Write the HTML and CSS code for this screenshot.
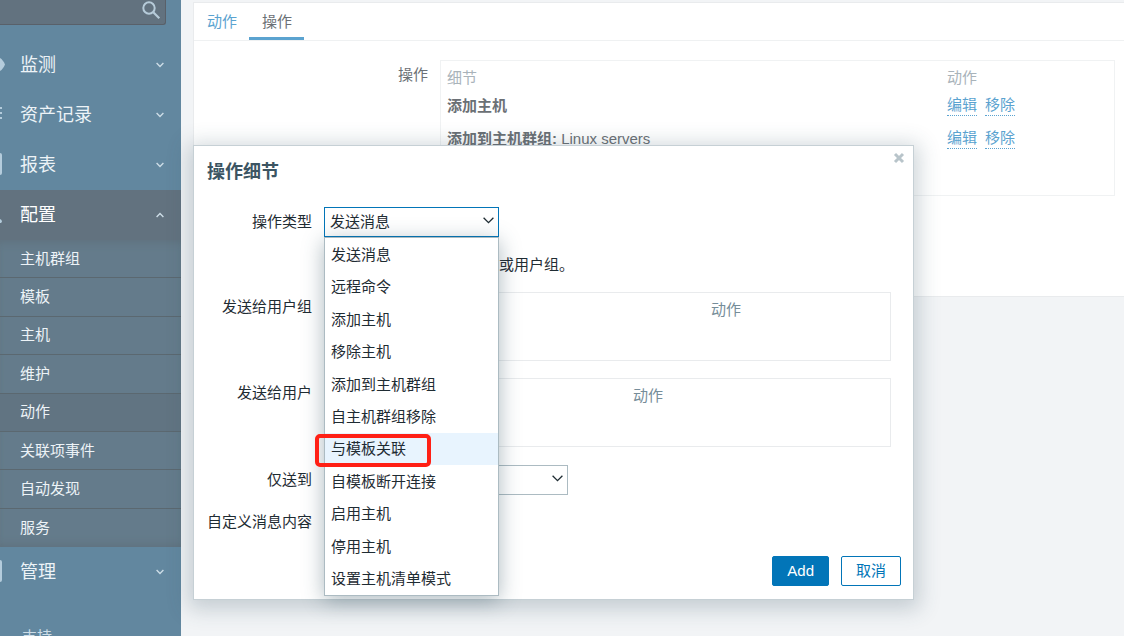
FILE: index.html
```html
<!DOCTYPE html>
<html lang="zh-CN">
<head>
<meta charset="utf-8">
<meta name="viewport" content="width=device-width, initial-scale=1">
<title>操作细节</title>
<link rel="stylesheet" href="styles.css">
</head>
<body>
<svg class="defs" aria-hidden="true">
  <symbol id="chevron" viewBox="0 0 8 6"><path d="M.6 1 4 4.4 7.4 1" fill="none" stroke="currentColor" stroke-width="1.4"/></symbol>
  <symbol id="arrow" viewBox="0 0 11 7"><path d="M.6 .8 5.500 5.700 10.400 .8" fill="none" stroke="currentColor" stroke-width="1.300"/></symbol>
</svg>
<div class="app">
  <aside class="sidebar">
    <div class="search">
      <input class="search-input" type="text" aria-label="搜索">
      <button class="search-button" type="button" aria-label="搜索">
        <svg width="20" height="20" viewBox="0 0 20 20"><circle cx="8" cy="8" r="5.700" fill="none" stroke="currentColor" stroke-width="2"/><path d="m12.300 12.300 6 6" stroke="currentColor" stroke-width="2.200"/></svg>
      </button>
    </div>
    <nav>
      <ul class="menu">
        <li><a class="menu-link" href="#"><svg class="menu-icon" viewBox="0 0 5 24"><path d="M0 5C2 6 4 9 5 11.500 4 14 2 17 0 18z" fill="currentColor"/></svg><span>监测</span><svg class="chevron"><use href="#chevron"/></svg></a></li>
        <li><a class="menu-link" href="#"><svg class="menu-icon" viewBox="0 0 5 24"><path d="M0 4h2v2H0zM0 9h2v2H0zM0 14h2v2H0z" fill="currentColor"/></svg><span>资产记录</span><svg class="chevron"><use href="#chevron"/></svg></a></li>
        <li><a class="menu-link" href="#"><svg class="menu-icon" viewBox="0 0 5 24"><path d="M0 0q2 0 2 2v18q0 2-2 2z" fill="currentColor"/></svg><span>报表</span><svg class="chevron"><use href="#chevron"/></svg></a></li>
        <li>
          <a class="menu-link menu-link-open" href="#" aria-expanded="true"><svg class="menu-icon" viewBox="0 0 5 24"><path d="M0 16 1.500 17 2 19 .8 20H0z" fill="currentColor"/></svg><span>配置</span><svg class="chevron chevron-up"><use href="#chevron"/></svg></a>
          <ul class="submenu">
            <li><a href="#">主机群组</a></li>
            <li><a href="#">模板</a></li>
            <li><a href="#">主机</a></li>
            <li><a href="#">维护</a></li>
            <li class="selected"><a href="#">动作</a></li>
            <li><a href="#">关联项事件</a></li>
            <li><a href="#">自动发现</a></li>
            <li><a href="#">服务</a></li>
          </ul>
        </li>
        <li><a class="menu-link" href="#"><svg class="menu-icon" viewBox="0 0 5 24"><path d="M0 0q2 0 2 2v18q0 2-2 2z" fill="currentColor"/></svg><span>管理</span><svg class="chevron"><use href="#chevron"/></svg></a></li>
      </ul>
      <a class="support" href="#">支持</a>
    </nav>
  </aside>

  <main class="content">
    <section class="panel">
      <div class="tabs" role="tablist">
        <a class="tab" role="tab" href="#">动作</a>
        <a class="tab tab-active" role="tab" aria-selected="true" href="#">操作</a>
      </div>
      <div class="panel-body">
        <div class="panel-label">操作</div>
        <div class="operations">
          <table class="operations-table">
            <thead><tr><th>细节</th><th class="actions-col">动作</th></tr></thead>
            <tbody>
              <tr><td><b>添加主机</b></td><td><div class="links"><a href="#">编辑</a><a href="#">移除</a></div></td></tr>
              <tr><td><b>添加到主机群组:</b> Linux servers</td><td><div class="links"><a href="#">编辑</a><a href="#">移除</a></div></td></tr>
            </tbody>
          </table>
        </div>
      </div>
    </section>
  </main>
</div>

<div class="dialog" role="dialog" aria-labelledby="dialog-title">
  <button class="close" type="button" aria-label="关闭"><svg width="12" height="12" viewBox="0 0 12 12"><path d="m2 2 8 8M10 2l-8 8" stroke="currentColor" stroke-width="3"/></svg></button>
  <h1 class="dialog-title" id="dialog-title">操作细节</h1>
  <form class="form">
    <label class="label" for="type">操作类型</label>
    <div class="select select-type">
      <select id="type" class="select-open"><option>发送消息</option></select>
      <svg class="arrow"><use href="#arrow"/></svg>
      <ul class="options" role="listbox" aria-label="操作类型">
        <li role="option">发送消息</li>
        <li role="option">远程命令</li>
        <li role="option">添加主机</li>
        <li role="option">移除主机</li>
        <li role="option">添加到主机群组</li>
        <li role="option">自主机群组移除</li>
        <li role="option" class="option-hover">与模板关联<span class="marker"></span></li>
        <li role="option">自模板断开连接</li>
        <li role="option">启用主机</li>
        <li role="option">停用主机</li>
        <li role="option">设置主机清单模式</li>
      </ul>
    </div>

    <p class="note">或用户组。</p>

    <div class="label">发送给用户组</div>
    <div class="recipients">
      <table class="recipients-table"><thead><tr><td class="group-col"></td><th>动作</th></tr></thead></table>
    </div>

    <div class="label">发送给用户</div>
    <div class="recipients">
      <table class="recipients-table"><thead><tr><td class="user-col"></td><th>动作</th></tr></thead></table>
    </div>

    <label class="label" for="media">仅送到</label>
    <div class="select select-media">
      <select id="media"><option></option></select>
      <svg class="arrow"><use href="#arrow"/></svg>
    </div>

    <div class="label label-message">自定义消息内容</div>
  </form>
  <div class="buttons">
    <button class="button button-primary" type="button">Add</button>
    <button class="button" type="button">取消</button>
  </div>
</div>
</body>
</html>
```

FILE: styles.css
```css
* { box-sizing: border-box; }

body {
  margin: 0;
  height: 100vh;
  overflow: hidden;
  position: relative;
  background: #f2f4f6;
  color: #1f2c33;
  font: 15px/20px "Liberation Sans", "Noto Sans CJK SC", sans-serif;
}

ul { list-style: none; margin: 0; padding: 0; }
a { color: inherit; text-decoration: none; }
button, select, input { font: inherit; color: inherit; }
.defs { position: absolute; width: 0; height: 0; }

.app { display: flex; height: 100%; }

/* Sidebar */
.sidebar {
  flex: 0 0 181px;
  overflow: hidden;
  background: #62879f;
  color: #edf3f7;
}
.search {
  display: flex;
  align-items: flex-start;
  height: 25px;
  margin: 0 15px 15px 0;
  background: #62727f;
  border: solid #596069;
  border-width: 0 1px 1px 0;
  border-bottom-right-radius: 3px;
}
.search-input { flex: 1; min-width: 0; height: 24px; border: 0; background: none; }
.search-button {
  height: 20px;
  padding: 0;
  margin-right: 4px;
  border: 0;
  background: none;
  color: #b6cbd9;
}
.search-button svg { display: block; }

.menu-link {
  display: flex;
  align-items: center;
  height: 50px;
  padding-right: 17px;
  font-size: 18px;
}
.menu-link span { flex: 1; }
.menu-icon { width: 5px; height: 24px; margin-right: 15px; color: #b4ccdc; }
.chevron { width: 8px; height: 6px; color: #cddde7; }
.chevron-up { transform: rotate(180deg); }
.menu-link-open { background: #62727f; color: #fff; }
.submenu {
  display: grid;
  grid-auto-rows: 1fr;
  min-height: 307px;
  background: #647b8b;
  box-shadow: inset 0 8px 8px -6px #60717d, inset 0 -8px 8px -6px #60717d;
}
.submenu li { display: flex; border-bottom: 1px solid #5b6870; }
.submenu li:last-child { border-bottom: 0; }
.submenu a { flex: 1; display: flex; align-items: center; padding-left: 20px; }
.submenu .selected { background: #617482; }
.support { display: block; margin-top: 30px; padding-left: 22px; color: #cddde7; }

/* Page */
.content { flex: 1; min-width: 0; padding: 2px 0 0 12px; }
.panel {
  min-height: 295px;
  background: #fff;
  border: solid #e9ebed;
  border-width: 1px 0 1px 1px;
  color: #6b7075;
}
.tabs { display: flex; height: 38px; border-bottom: 1px solid #eff1f2; }
.tab { padding: 9px 12px 0 13px; color: #5ba3d0; }
.tab-active { color: #6b7075; border-bottom: 3px solid #5ba3d0; }
.panel-body {
  display: grid;
  grid-template-columns: 234px 1fr;
  column-gap: 12px;
  padding: 19px 9px 0 0;
}
.panel-label { padding-top: 5px; text-align: right; }
.operations { min-height: 136px; border: 1px solid #f0f2f3; padding: 3px 6px; }
.operations-table { width: 100%; border-collapse: collapse; table-layout: fixed; }
.operations-table th { padding: 4px 0; font-weight: 400; text-align: left; color: #a9b3ba; }
.operations-table td { padding: 3px 0 9px; }
.operations-table .actions-col { width: 161px; }
.links { display: flex; gap: 8px; color: #5ba3d0; }
.links a { border-bottom: 1px dotted #5ba3d0; }

/* Dialog */
.dialog {
  position: absolute;
  left: 193px;
  top: 145px;
  width: 721px;
  padding: 16px 12px 13px 13px;
  background: #fff;
  border: 1px solid #c6d0d5;
  box-shadow: 0 4px 20px 5px rgba(50, 80, 95, .24);
}
.close {
  position: absolute;
  top: 6px;
  right: 8px;
  width: 12px;
  height: 12px;
  padding: 0;
  border: 0;
  background: none;
  color: #b8c4ca;
}
.close svg { display: block; }
.dialog-title { margin: 0 0 25px; font-size: 18px; line-height: 20px; color: #3c5563; }
.form {
  display: grid;
  grid-template-columns: 105px 1fr;
  column-gap: 12px;
  margin-right: 10px;
}
.label { padding-top: 5px; text-align: right; }
.label-message { padding: 17px 0 24px; }
.note { grid-column: 2; margin: 18px 0 17px; padding-left: 175px; }
.recipients { min-height: 69px; margin-bottom: 17px; border: 1px solid #e9ebed; padding: 7px 6px; }
.recipients-table { border-collapse: collapse; }
.recipients-table td, .recipients-table th { padding: 0; font-weight: 400; color: #768d99; }
.group-col { width: 380px; }
.user-col { width: 302px; }

.select { position: relative; height: 30px; }
.select-type { width: 175px; }
.select-media { width: 244px; }
.recipients + .label[for="media"], .recipients + .label + .select-media { margin-top: 1px; }
.select select {
  appearance: none;
  width: 100%;
  height: 30px;
  padding: 0 5px;
  border: 1px solid #acbbc2;
  border-radius: 0;
  background: #fff;
}
.select .select-open { border-color: #0275b8; }
.arrow { position: absolute; right: 5px; top: 10px; width: 11px; height: 7px; pointer-events: none; }
.options {
  position: absolute;
  z-index: 2;
  top: 30px;
  left: 0;
  width: 100%;
  min-height: 359px;
  display: grid;
  grid-auto-rows: 1fr;
  background: #fff;
  border: 1px solid #acbbc2;
  box-shadow: 0 4px 20px rgba(50, 80, 95, .4);
}
.options li { position: relative; display: flex; align-items: center; padding: 1px 6px 0; }
.options .option-hover { background: #e8f4fe; }
.marker {
  position: absolute;
  left: -10px;
  top: 1px;
  width: 116px;
  height: 33px;
  border: 4px solid #ff2015;
  border-radius: 5px;
}

.buttons { display: flex; justify-content: flex-end; gap: 12px; }
.button {
  height: 30px;
  padding: 0 14px;
  border: 1px solid #0275b8;
  border-radius: 2px;
  background: #fff;
  color: #0275b8;
}
.button-primary { background: #0275b8; color: #fff; }
```
